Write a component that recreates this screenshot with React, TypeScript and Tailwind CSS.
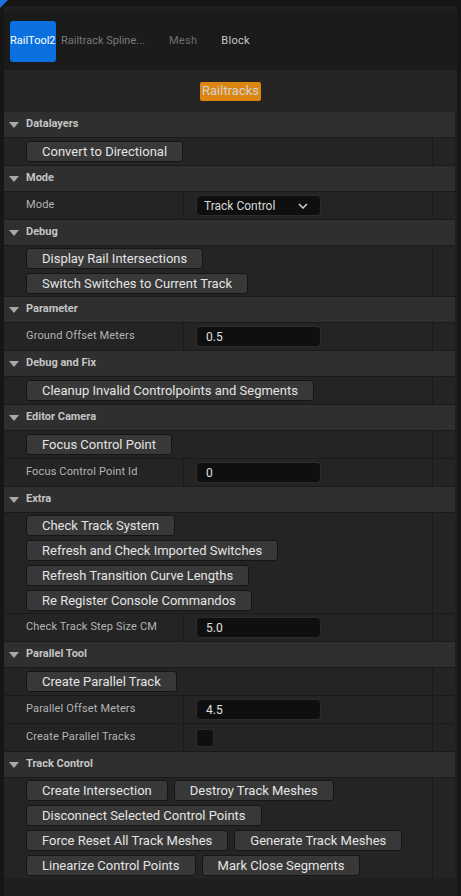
import type { ReactNode } from "react";

const font = { fontFamily: "Roboto, 'Noto Sans', sans-serif" };

function Caret() {
  return (
    <svg width="10" height="6" viewBox="0 0 10 6" className="shrink-0">
      <path d="M0 0 L10 0 L5 6 Z" fill="#a8a8a8" />
    </svg>
  );
}

function Header({ title }: { title: string }) {
  return (
    <div className="h-[25px] bg-[#2f2f2f] flex items-center pl-[5px] gap-[7px]">
      <Caret />
      <span className="text-[11px] font-bold text-[#c4c4c4]">{title}</span>
    </div>
  );
}

function Btn({ children }: { children: ReactNode }) {
  return (
    <button className="h-[21px] px-[15px] bg-[#383838] border border-[#151515] rounded-[3px] text-[13px] leading-none text-[#e4e4e4] whitespace-nowrap">
      {children}
    </button>
  );
}

function ButtonRow({ rows }: { rows: string[][] }) {
  return (
    <div className="flex bg-[#242424]">
      <div className={`flex-1 pl-[22px] flex flex-col gap-[4px] ${rows.length === 1 ? "py-[3px]" : "py-[2px]"}`}>
        {rows.map((r, i) => (
          <div key={i} className="flex gap-[6px]">
            {r.map((b) => (
              <Btn key={b}>{b}</Btn>
            ))}
          </div>
        ))}
      </div>
      <div className="w-[23px] border-l border-[#1a1a1a]" />
    </div>
  );
}

function PropRow({ name, children }: { name: string; children: ReactNode }) {
  return (
    <div className="flex h-[27px] bg-[#242424]">
      <div className="w-[180px] pl-[22px] flex items-center border-r border-[#1a1a1a] text-[11px] tracking-[0.15px] text-[#b4b4b4]">
        {name}
      </div>
      <div className="flex-1 pl-[12px] flex items-center">{children}</div>
      <div className="w-[23px] border-l border-[#1a1a1a]" />
    </div>
  );
}

function Input({ value }: { value: string }) {
  return (
    <div className="w-[125px] h-[21px] bg-[#0f0f0f] border border-[#2c2c2c] rounded-[4px] flex items-center pl-[9px] text-[12px] text-[#e0e0e0]">
      {value}
    </div>
  );
}

export default function App() {
  return (
    <div className="w-[461px] h-[896px] bg-[#161616] flex flex-col overflow-hidden" style={font}>
      <div className="relative h-[6px] shrink-0">
        <svg width="8" height="8" viewBox="0 0 8 8" className="absolute left-0 top-0">
          <path d="M0 0 L8 0 L0 8 Z" fill="#1a73e0" />
        </svg>
      </div>
      <div className="ml-[4px] mr-[4px] flex-1 flex flex-col bg-[#1f1f1f]">
        <div className="h-[6px] bg-[#1f1f1f]" />
        <div className="h-[58px] bg-[#1b1b1b] flex items-center pl-[6px]">
          <div className="w-[46px] h-[41px] bg-[#0a70e0] rounded-[3px] flex items-center text-[11px] text-white">
            RailTool2
          </div>
          <span className="ml-[5px] text-[11px] text-[#7a7a7a]">Railtrack Spline...</span>
          <span className="ml-[24px] text-[11px] tracking-[0.3px] text-[#707070]">Mesh</span>
          <span className="ml-[24px] text-[11px] tracking-[0.3px] text-[#c8c8c8]">Block</span>
        </div>
        <div className="h-[42px] bg-[#242424] flex items-center justify-center">
          <div className="h-[19px] px-[2px] bg-[#dc850f] rounded-[2px] flex items-center text-[13px] text-[#d2d2d2]">
            Railtracks
          </div>
        </div>
        <div className="mr-[2px] flex flex-col gap-px bg-[#1a1a1a]">
          <Header title="Datalayers" />
          <ButtonRow rows={[["Convert to Directional"]]} />
          <Header title="Mode" />
          <PropRow name="Mode">
            <div className="w-[125px] h-[21px] bg-[#0f0f0f] border border-[#2c2c2c] rounded-[4px] flex items-center justify-between pl-[7px] pr-[12px] text-[12px] text-[#d8d8d8]">
              Track Control
              <svg width="10" height="6" viewBox="0 0 10 6">
                <path d="M1 1 L5 5 L9 1" stroke="#d0d0d0" strokeWidth="1.5" fill="none" />
              </svg>
            </div>
          </PropRow>
          <Header title="Debug" />
          <ButtonRow rows={[["Display Rail Intersections"], ["Switch Switches to Current Track"]]} />
          <Header title="Parameter" />
          <PropRow name="Ground Offset Meters">
            <Input value="0.5" />
          </PropRow>
          <Header title="Debug and Fix" />
          <ButtonRow rows={[["Cleanup Invalid Controlpoints and Segments"]]} />
          <Header title="Editor Camera" />
          <ButtonRow rows={[["Focus Control Point"]]} />
          <PropRow name="Focus Control Point Id">
            <Input value="0" />
          </PropRow>
          <Header title="Extra" />
          <ButtonRow
            rows={[
              ["Check Track System"],
              ["Refresh and Check Imported Switches"],
              ["Refresh Transition Curve Lengths"],
              ["Re Register Console Commandos"],
            ]}
          />
          <PropRow name="Check Track Step Size CM">
            <Input value="5.0" />
          </PropRow>
          <Header title="Parallel Tool" />
          <ButtonRow rows={[["Create Parallel Track"]]} />
          <PropRow name="Parallel Offset Meters">
            <Input value="4.5" />
          </PropRow>
          <PropRow name="Create Parallel Tracks">
            <div className="w-[18px] h-[18px] bg-[#0f0f0f] border border-[#2c2c2c] rounded-[3px]" />
          </PropRow>
          <Header title="Track Control" />
          <ButtonRow
            rows={[
              ["Create Intersection", "Destroy Track Meshes"],
              ["Disconnect Selected Control Points"],
              ["Force Reset All Track Meshes", "Generate Track Meshes"],
              ["Linearize Control Points", "Mark Close Segments"],
            ]}
          />
        </div>
        <div className="flex-1 bg-[#1f1f1f]" />
      </div>
    </div>
  );
}
